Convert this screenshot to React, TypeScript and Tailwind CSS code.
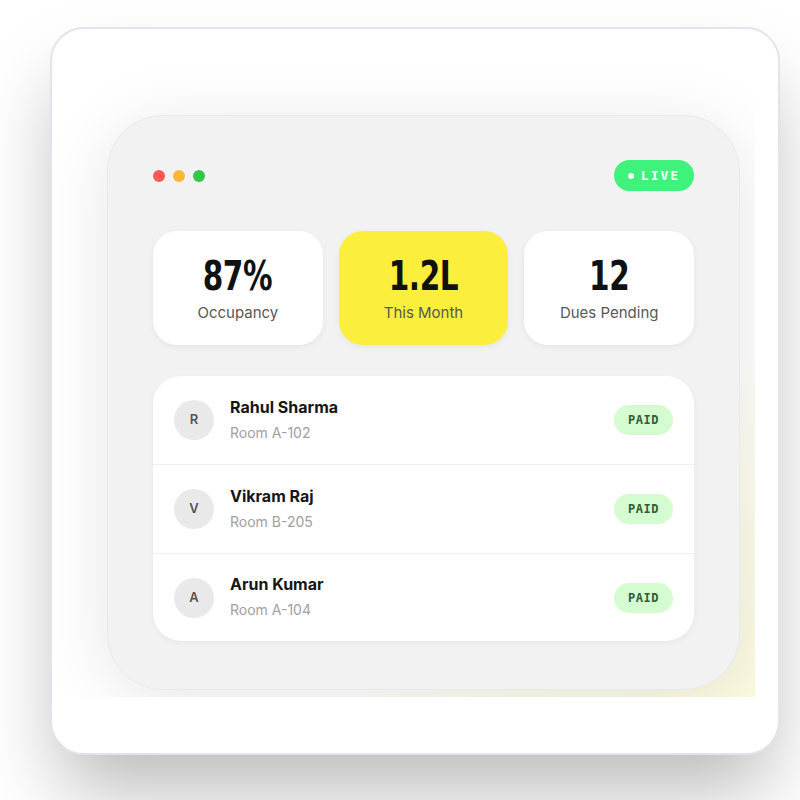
import React from "react";

const SANS = "font-['Inter','Noto_Sans',sans-serif]";
const MONO = "font-['DejaVu_Sans_Mono','Liberation_Mono',monospace]";
const NUM = "font-['Liberation_Sans_Narrow','DejaVu_Sans_Condensed','Liberation_Sans',sans-serif]";

const stats = [
  { value: "87%", label: "Occupancy", yellow: false },
  { value: "1.2L", label: "This Month", yellow: true },
  { value: "12", label: "Dues Pending", yellow: false },
];

const tenants = [
  { initial: "R", name: "Rahul Sharma", room: "Room A-102" },
  { initial: "V", name: "Vikram Raj", room: "Room B-205" },
  { initial: "A", name: "Arun Kumar", room: "Room A-104" },
];

function StatCard({ value, label, yellow }: { value: string; label: string; yellow: boolean }) {
  return (
    <div
      className={`flex h-[114px] flex-col items-center justify-center rounded-[24px] shadow-[0_2px_6px_rgba(0,0,0,0.06)] ${
        yellow ? "bg-[#fcee3c]" : "bg-white"
      }`}
    >
      <span className={`${NUM} inline-block scale-x-[0.8] text-[41px] font-bold leading-none tracking-[-0.5px] text-[#111]`}>
        {value}
      </span>
      <span className={`${SANS} mt-[8px] text-[15px] leading-none text-[#575757]`}>{label}</span>
    </div>
  );
}

function TenantRow({ initial, name, room, last }: { initial: string; name: string; room: string; last: boolean }) {
  return (
    <div className={`flex items-center px-[21px] ${last ? "h-[87px]" : "h-[89px] border-b border-[#efefef]"}`}>
      <div className="flex h-[40px] w-[40px] items-center justify-center rounded-full bg-[#e9e9e9]">
        <span className={`${SANS} text-[13px] font-semibold text-[#555]`}>{initial}</span>
      </div>
      <div className="ml-[16px] flex flex-1 flex-col pb-[2px]">
        <span className={`${SANS} text-[16px] font-bold leading-none text-[#161616]`}>{name}</span>
        <span className={`${SANS} mt-[11px] text-[14px] leading-none text-[#a0a0a0]`}>{room}</span>
      </div>
      <div className="flex h-[30px] w-[59px] items-center justify-center rounded-full bg-[#d4fcd0]">
        <span className={`${MONO} text-[12px] font-bold tracking-[0.5px] text-[#2f5d36]`}>PAID</span>
      </div>
    </div>
  );
}

export default function App() {
  return (
    <div className="h-[800px] w-[800px] overflow-hidden bg-white pl-[50px] pt-[27px]">
      <div className="flex h-[728px] w-[730px] flex-col rounded-[34px] border-2 border-[#dfe5ee] bg-white shadow-[0_45px_80px_-10px_rgba(0,0,0,0.28)]">
        {/* mockup area, clipped glow */}
        <div className="relative mr-[23px] overflow-hidden pb-[7px] pl-[55px] pr-[15px] pt-[86px]">
          <div className="absolute bottom-0 right-0 h-[340px] w-[400px] bg-[radial-gradient(ellipse_at_bottom_right,#fcfadf,rgba(252,250,223,0.5)_45%,transparent_75%)]" />
          <div className="relative h-[575px] w-[633px] rounded-[56px] border border-[#e9e9e9] bg-[#f2f2f2] px-[45px] pt-[44px] shadow-[0_10px_70px_rgba(0,0,0,0.1)]">
            <div className="flex items-center justify-between">
              <div className="flex items-center gap-[8px]">
                <span className="h-[12px] w-[12px] rounded-full bg-[#fd5858]" />
                <span className="h-[12px] w-[12px] rounded-full bg-[#fdb737]" />
                <span className="h-[12px] w-[12px] rounded-full bg-[#33c748]" />
              </div>
              <div className="flex h-[31px] w-[80px] items-center justify-center gap-[7px] rounded-full bg-[#3ef27c]">
                <span className="h-[6px] w-[6px] rounded-full bg-white" />
                <span className={`${MONO} text-[13px] font-bold tracking-[2px] text-white`}>LIVE</span>
              </div>
            </div>

            <div className="mt-[40px] grid grid-cols-3 gap-[16px]">
              {stats.map((s) => (
                <StatCard key={s.label} {...s} />
              ))}
            </div>

            <div className="mt-[31px] overflow-hidden rounded-[28px] bg-white shadow-[0_2px_6px_rgba(0,0,0,0.05)]">
              {tenants.map((t, i) => (
                <TenantRow key={t.name} {...t} last={i === tenants.length - 1} />
              ))}
            </div>
          </div>
        </div>
      </div>
    </div>
  );
}
